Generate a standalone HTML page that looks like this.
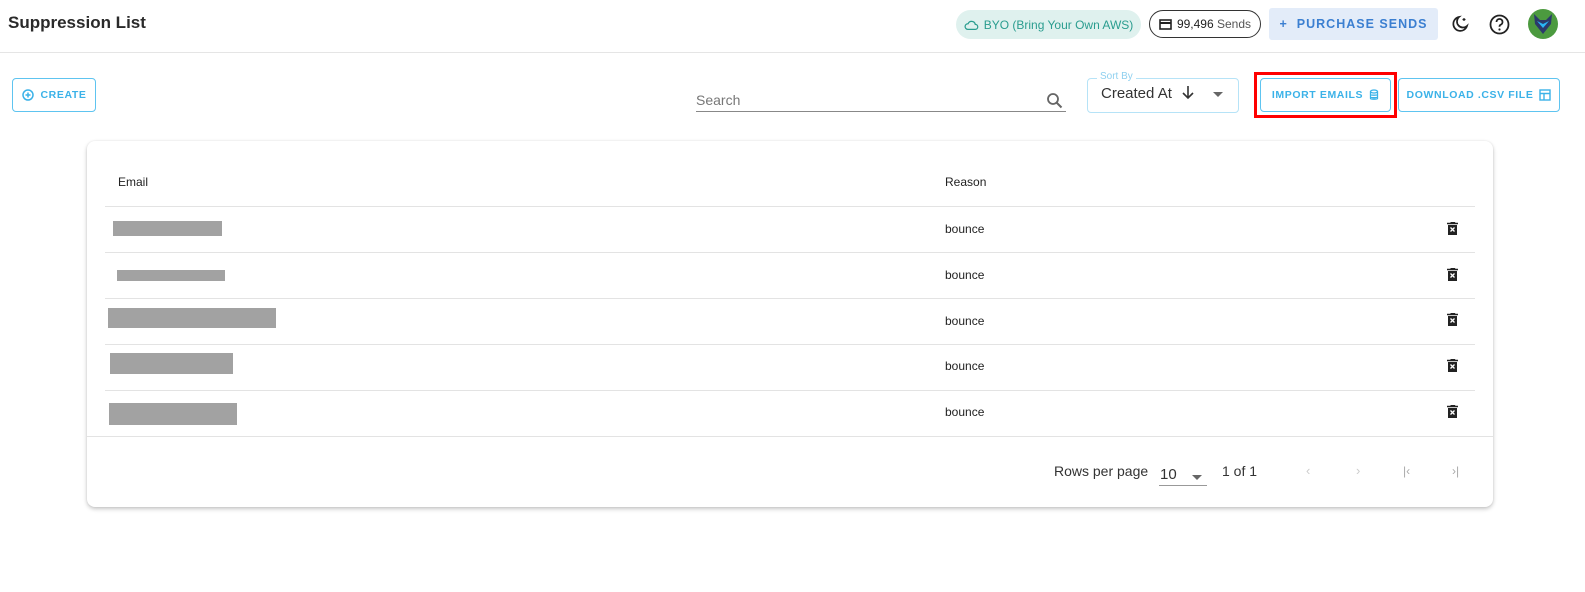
<!DOCTYPE html>
<html><head><meta charset="utf-8"><style>
body{margin:0;width:1585px;height:592px;background:#fff;font-family:"Liberation Sans",sans-serif;position:relative;overflow:hidden;color:#222}
.a{position:absolute}
.btn{position:absolute;border:1.5px solid #5ec4f0;border-radius:4px;color:#3bb2e8;font-size:10.5px;font-weight:bold;letter-spacing:0.6px;display:flex;align-items:center;justify-content:center;box-sizing:border-box;white-space:nowrap}
.line{position:absolute;left:105px;width:1370px;height:1px;background:#e3e3e3}
.g{position:absolute;background:#a2a2a2}
.r{position:absolute;left:945px;font-size:12px;color:#222}
.t{position:absolute;left:1447px}
</style></head><body>
<div class="a" style="left:8px;top:13px;font-size:17px;font-weight:bold;color:#2a2a2a">Suppression List</div>
<div class="a" style="left:0;top:52px;width:1585px;height:1px;background:#e5e5e5"></div>
<div class="a" style="left:956px;top:10px;width:185px;height:29px;border-radius:15px;background:#dff1ee;color:#2a9d8f;font-size:12px;display:flex;align-items:center;justify-content:center;gap:5px">
<svg width="15" height="12" viewBox="0 0 24 18"><path d="M6 16h12a4 4 0 0 0 0-8 6 6 0 0 0-11.5-1A4.5 4.5 0 0 0 6 16z" fill="none" stroke="#2a9d8f" stroke-width="2"/></svg>BYO (Bring Your Own AWS)</div>
<div class="a" style="left:1149px;top:10px;width:112px;height:28px;box-sizing:border-box;border:1.5px solid #333;border-radius:15px;font-size:12px;display:flex;align-items:center;justify-content:center;gap:5px">
<svg width="13" height="11" viewBox="0 0 13 11"><rect x="1" y="1" width="11" height="9" fill="none" stroke="#222" stroke-width="1.6"/><rect x="1" y="3" width="11" height="2" fill="#222"/></svg><span>99,496 <span style="color:#555">Sends</span></span></div>
<div class="a" style="left:1269px;top:8px;width:169px;height:32px;background:#e3ecf9;border-radius:3px;color:#3b7fd1;font-size:12.5px;font-weight:bold;letter-spacing:1px;display:flex;align-items:center;justify-content:center">+&nbsp;&nbsp;PURCHASE SENDS</div>
<svg class="a" style="left:1451px;top:15px" width="18" height="18" viewBox="0 0 18 18"><path d="M8 2a7 7 0 1 0 8 9 6 6 0 0 1-8-9z" fill="none" stroke="#222" stroke-width="1.7"/><path d="M13 3v3M11.5 4.5h3" stroke="#222" stroke-width="1.2"/></svg>
<svg class="a" style="left:1489px;top:14px" width="21" height="21" viewBox="0 0 21 21"><circle cx="10.5" cy="10.5" r="9" fill="none" stroke="#222" stroke-width="1.8"/><path d="M7.5 8a3 3 0 1 1 4 2.8c-.8.4-1 1-1 2" fill="none" stroke="#222" stroke-width="1.8"/><circle cx="10.5" cy="15.5" r="1.1" fill="#222"/></svg>
<div class="a" style="left:1528px;top:9px;width:30px;height:30px;border-radius:50%;background:#4c9a3f;overflow:hidden"><svg width="30" height="30" viewBox="0 0 30 30"><path d="M6 5l6 6h6l6-6-1 10-8 10-8-10z" fill="#2b3a6b"/><path d="M9 12l6 3 6-3-6 7z" fill="#29b6f6"/></svg></div>

<div class="btn" style="left:12px;top:78px;width:84px;height:34px"><svg width="12" height="12" viewBox="0 0 12 12" style="margin-right:7px"><circle cx="6" cy="6" r="5" fill="none" stroke="#3bb2e8" stroke-width="1.5"/><path d="M6 3.5v5M3.5 6h5" stroke="#3bb2e8" stroke-width="1.5"/></svg>CREATE</div>

<div class="a" style="left:696px;top:92px;font-size:14px;color:#777">Search</div>
<div class="a" style="left:696px;top:111px;width:370px;height:1px;background:#888"></div>
<svg class="a" style="left:1046px;top:92px" width="17" height="17" viewBox="0 0 17 17"><circle cx="7" cy="7" r="5" fill="none" stroke="#666" stroke-width="1.8"/><path d="M10.5 10.5l5 5" stroke="#666" stroke-width="2"/></svg>

<div class="a" style="left:1087px;top:78px;width:150px;height:33px;border:1px solid #b6e3f7;border-radius:4px"></div>
<div class="a" style="left:1097px;top:71px;background:#fff;padding:0 3px;font-size:10px;color:#8fd0ef">Sort By</div>
<div class="a" style="left:1101px;top:85px;font-size:15px;color:#333">Created At</div>
<svg class="a" style="left:1181px;top:85px" width="14" height="15" viewBox="0 0 14 15"><path d="M7 1v12M2 8l5 5 5-5" fill="none" stroke="#333" stroke-width="1.6"/></svg>
<div class="a" style="left:1213px;top:92px;width:0;height:0;border-left:5px solid transparent;border-right:5px solid transparent;border-top:5px solid #666"></div>

<div class="a" style="left:1254px;top:72px;width:143px;height:46px;box-sizing:border-box;border:3px solid #f00"></div>
<div class="btn" style="left:1260px;top:78px;width:131px;height:34px">IMPORT EMAILS<svg width="10" height="12" viewBox="0 0 10 12" style="margin-left:6px"><ellipse cx="5" cy="2.5" rx="3.5" ry="1.5" fill="none" stroke="#3bb2e8" stroke-width="1.3"/><path d="M1.5 2.5v7c0 1 7 1 7 0v-7M1.5 5.5c0 1 7 1 7 0M1.5 8c0 1 7 1 7 0" fill="none" stroke="#3bb2e8" stroke-width="1.3"/></svg></div>
<div class="btn" style="left:1398px;top:78px;width:162px;height:34px">DOWNLOAD .CSV FILE<svg width="12" height="12" viewBox="0 0 12 12" style="margin-left:6px"><rect x="1" y="1" width="10" height="10" fill="none" stroke="#3bb2e8" stroke-width="1.4"/><path d="M1 4.5h10M5 4.5v6.5" stroke="#3bb2e8" stroke-width="1.4"/></svg></div>

<div class="a" style="left:87px;top:141px;width:1406px;height:366px;border-radius:8px;background:#fff;box-shadow:0 2px 4px rgba(0,0,0,.22),0 0 2px rgba(0,0,0,.08)"></div>
<div class="a" style="left:118px;top:175px;font-size:12px;color:#222">Email</div>
<div class="a" style="left:945px;top:175px;font-size:12px;color:#222">Reason</div>
<div class="line" style="top:206px"></div>
<div class="line" style="top:252px"></div>
<div class="line" style="top:298px"></div>
<div class="line" style="top:344px"></div>
<div class="line" style="top:390px"></div>
<div class="a" style="left:87px;width:1406px;top:436px;height:1px;background:#e3e3e3"></div>

<div class="g" style="left:113px;top:221px;width:109px;height:15px"></div>
<div class="g" style="left:117px;top:270px;width:108px;height:11px"></div>
<div class="g" style="left:108px;top:308px;width:168px;height:20px"></div>
<div class="g" style="left:110px;top:353px;width:123px;height:21px"></div>
<div class="g" style="left:109px;top:403px;width:128px;height:22px"></div>

<div class="r" style="top:222px">bounce</div>
<div class="r" style="top:268px">bounce</div>
<div class="r" style="top:314px">bounce</div>
<div class="r" style="top:359px">bounce</div>
<div class="r" style="top:405px">bounce</div>

<svg class="t" style="top:222px" width="11" height="13" viewBox="0 0 11 13"><path d="M0 1.5h11M3.5 0h4v1.5" stroke="#222" stroke-width="1.4" fill="none"/><rect x="1" y="3" width="9" height="10" fill="#222"/><path d="M3.5 5.5l4 4M7.5 5.5l-4 4" stroke="#fff" stroke-width="1.3"/></svg>
<svg class="t" style="top:268px" width="11" height="13" viewBox="0 0 11 13"><path d="M0 1.5h11M3.5 0h4v1.5" stroke="#222" stroke-width="1.4" fill="none"/><rect x="1" y="3" width="9" height="10" fill="#222"/><path d="M3.5 5.5l4 4M7.5 5.5l-4 4" stroke="#fff" stroke-width="1.3"/></svg>
<svg class="t" style="top:313px" width="11" height="13" viewBox="0 0 11 13"><path d="M0 1.5h11M3.5 0h4v1.5" stroke="#222" stroke-width="1.4" fill="none"/><rect x="1" y="3" width="9" height="10" fill="#222"/><path d="M3.5 5.5l4 4M7.5 5.5l-4 4" stroke="#fff" stroke-width="1.3"/></svg>
<svg class="t" style="top:359px" width="11" height="13" viewBox="0 0 11 13"><path d="M0 1.5h11M3.5 0h4v1.5" stroke="#222" stroke-width="1.4" fill="none"/><rect x="1" y="3" width="9" height="10" fill="#222"/><path d="M3.5 5.5l4 4M7.5 5.5l-4 4" stroke="#fff" stroke-width="1.3"/></svg>
<svg class="t" style="top:405px" width="11" height="13" viewBox="0 0 11 13"><path d="M0 1.5h11M3.5 0h4v1.5" stroke="#222" stroke-width="1.4" fill="none"/><rect x="1" y="3" width="9" height="10" fill="#222"/><path d="M3.5 5.5l4 4M7.5 5.5l-4 4" stroke="#fff" stroke-width="1.3"/></svg>

<div class="a" style="left:1054px;top:463px;font-size:14px;color:#333">Rows per page</div>
<div class="a" style="left:1160px;top:466px;font-size:15px;color:#333">10</div>
<div class="a" style="left:1192px;top:475px;width:0;height:0;border-left:5px solid transparent;border-right:5px solid transparent;border-top:5px solid #666"></div>
<div class="a" style="left:1159px;top:485px;width:48px;height:1px;background:#999"></div>
<div class="a" style="left:1222px;top:463px;font-size:14px;color:#333">1 of 1</div>
<div class="a" style="left:1306px;top:463px;font-size:13px;color:#ccc">&lsaquo;</div>
<div class="a" style="left:1356px;top:463px;font-size:13px;color:#ccc">&rsaquo;</div>
<div class="a" style="left:1403px;top:464px;font-size:12px;color:#aaa">|&lsaquo;</div>
<div class="a" style="left:1452px;top:464px;font-size:12px;color:#aaa">&rsaquo;|</div>
</body></html>
